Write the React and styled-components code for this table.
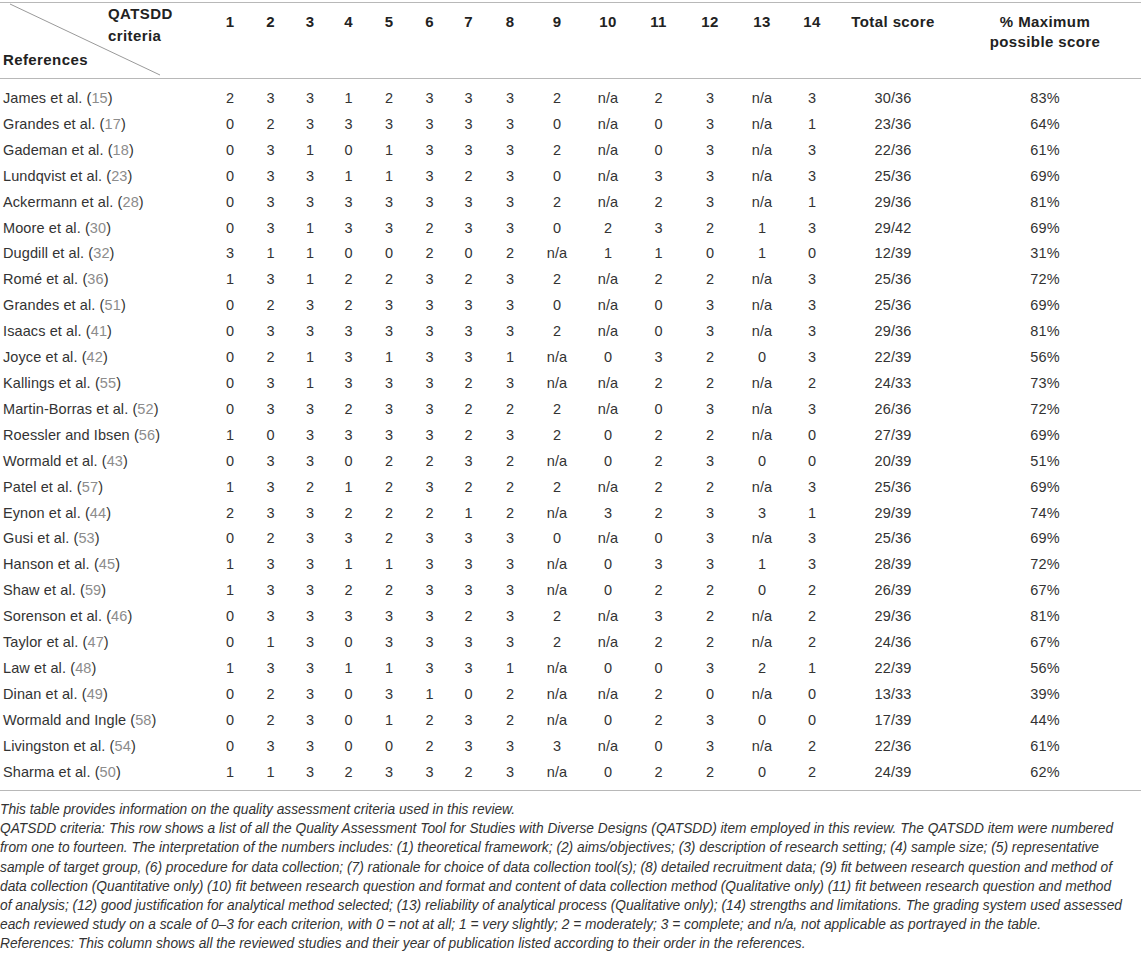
import React from "react";
import styled, { createGlobalStyle } from "styled-components";

const GlobalStyle = createGlobalStyle`
  html, body { margin: 0; padding: 0; background: #fff; }
  body { font-family: "Liberation Sans", Arial, Helvetica, sans-serif; }
`;

const Page = styled.div`
  width: 1144px;
  padding-top: 2px;
`;

const Table = styled.table`
  width: 1141px;
  table-layout: fixed;
  border-collapse: collapse;
  border-top: 1px solid #b8b8b8;
  border-bottom: 1px solid #b8b8b8;
  font-size: 14.5px;
  letter-spacing: 0.1px;
  color: #333;
`;

const HeadRow = styled.tr`
  border-bottom: 1px solid #b8b8b8;
`;

const HeadCell = styled.th`
  vertical-align: top;
  padding: 9px 0 0;
  line-height: 20px;
  font-size: 15px;
  letter-spacing: 0.4px;
  font-weight: bold;
  color: #222;
  text-align: center;
  white-space: nowrap;
`;

const CornerCell = styled.th`
  position: relative;
  height: 75px;
  padding: 0;
  text-align: left;
  vertical-align: top;
  font-size: 15px;
  letter-spacing: 0.4px;
  font-weight: bold;
  color: #222;
`;

const CornerInner = styled.div`
  height: 75px;
  box-sizing: border-box;
  padding: 0 0 8px 3px;
  display: flex;
  flex-direction: column;
  justify-content: space-between;
`;

const CriteriaLabel = styled.div`
  padding-left: 105px;
  line-height: 22px;
`;

const RefLabel = styled.div`
  line-height: 20px;
`;

const Diagonal = styled.svg`
  position: absolute;
  left: 0;
  top: 0;
  width: 210px;
  height: 75px;
  pointer-events: none;
`;

const Row = styled.tr`
  &:first-child td { padding-top: 11px; }
  &:last-child td { padding-bottom: 8.6px; }
`;

const Cell = styled.td`
  text-align: center;
  padding: 4px 0;
  line-height: 17.9px;
  white-space: nowrap;
`;

const NameCell = styled(Cell)`
  text-align: left;
  padding-left: 3px;
`;

const Cite = styled.span`
  color: #8c8c8c;
`;

const Foot = styled.div`
  padding-top: 9px;
  font-style: italic;
  font-size: 13.75px;
  line-height: 19.2px;
  color: #333;
  white-space: nowrap;
`;

const FootLine = styled.div``;

const colWidths = [210, 40, 41, 38, 39, 42, 39, 39, 44, 50, 52, 49, 54, 50, 50, 112, 192];

const rows = [
  ["James et al.", "15", "2 3 3 1 2 3 3 3 2 n/a 2 3 n/a 3 30/36 83%"],
  ["Grandes et al.", "17", "0 2 3 3 3 3 3 3 0 n/a 0 3 n/a 1 23/36 64%"],
  ["Gademan et al.", "18", "0 3 1 0 1 3 3 3 2 n/a 0 3 n/a 3 22/36 61%"],
  ["Lundqvist et al.", "23", "0 3 3 1 1 3 2 3 0 n/a 3 3 n/a 3 25/36 69%"],
  ["Ackermann et al.", "28", "0 3 3 3 3 3 3 3 2 n/a 2 3 n/a 1 29/36 81%"],
  ["Moore et al.", "30", "0 3 1 3 3 2 3 3 0 2 3 2 1 3 29/42 69%"],
  ["Dugdill et al.", "32", "3 1 1 0 0 2 0 2 n/a 1 1 0 1 0 12/39 31%"],
  ["Romé et al.", "36", "1 3 1 2 2 3 2 3 2 n/a 2 2 n/a 3 25/36 72%"],
  ["Grandes et al.", "51", "0 2 3 2 3 3 3 3 0 n/a 0 3 n/a 3 25/36 69%"],
  ["Isaacs et al.", "41", "0 3 3 3 3 3 3 3 2 n/a 0 3 n/a 3 29/36 81%"],
  ["Joyce et al.", "42", "0 2 1 3 1 3 3 1 n/a 0 3 2 0 3 22/39 56%"],
  ["Kallings et al.", "55", "0 3 1 3 3 3 2 3 n/a n/a 2 2 n/a 2 24/33 73%"],
  ["Martin-Borras et al.", "52", "0 3 3 2 3 3 2 2 2 n/a 0 3 n/a 3 26/36 72%"],
  ["Roessler and Ibsen", "56", "1 0 3 3 3 3 2 3 2 0 2 2 n/a 0 27/39 69%"],
  ["Wormald et al.", "43", "0 3 3 0 2 2 3 2 n/a 0 2 3 0 0 20/39 51%"],
  ["Patel et al.", "57", "1 3 2 1 2 3 2 2 2 n/a 2 2 n/a 3 25/36 69%"],
  ["Eynon et al.", "44", "2 3 3 2 2 2 1 2 n/a 3 2 3 3 1 29/39 74%"],
  ["Gusi et al.", "53", "0 2 3 3 2 3 3 3 0 n/a 0 3 n/a 3 25/36 69%"],
  ["Hanson et al.", "45", "1 3 3 1 1 3 3 3 n/a 0 3 3 1 3 28/39 72%"],
  ["Shaw et al.", "59", "1 3 3 2 2 3 3 3 n/a 0 2 2 0 2 26/39 67%"],
  ["Sorenson et al.", "46", "0 3 3 3 3 3 2 3 2 n/a 3 2 n/a 2 29/36 81%"],
  ["Taylor et al.", "47", "0 1 3 0 3 3 3 3 2 n/a 2 2 n/a 2 24/36 67%"],
  ["Law et al.", "48", "1 3 3 1 1 3 3 1 n/a 0 0 3 2 1 22/39 56%"],
  ["Dinan et al.", "49", "0 2 3 0 3 1 0 2 n/a n/a 2 0 n/a 0 13/33 39%"],
  ["Wormald and Ingle", "58", "0 2 3 0 1 2 3 2 n/a 0 2 3 0 0 17/39 44%"],
  ["Livingston et al.", "54", "0 3 3 0 0 2 3 3 3 n/a 0 3 n/a 2 22/36 61%"],
  ["Sharma et al.", "50", "1 1 3 2 3 3 2 3 n/a 0 2 2 0 2 24/39 62%"],
];

const footLines = [
  "This table provides information on the quality assessment criteria used in this review.",
  "QATSDD criteria: This row shows a list of all the Quality Assessment Tool for Studies with Diverse Designs (QATSDD) item employed in this review. The QATSDD item were numbered",
  "from one to fourteen. The interpretation of the numbers includes: (1) theoretical framework; (2) aims/objectives; (3) description of research setting; (4) sample size; (5) representative",
  "sample of target group, (6) procedure for data collection; (7) rationale for choice of data collection tool(s); (8) detailed recruitment data; (9) fit between research question and method of",
  "data collection (Quantitative only) (10) fit between research question and format and content of data collection method (Qualitative only) (11) fit between research question and method",
  "of analysis; (12) good justification for analytical method selected; (13) reliability of analytical process (Qualitative only); (14) strengths and limitations. The grading system used assessed",
  "each reviewed study on a scale of 0–3 for each criterion, with 0 = not at all; 1 = very slightly; 2 = moderately; 3 = complete; and n/a, not applicable as portrayed in the table.",
  "References: This column shows all the reviewed studies and their year of publication listed according to their order in the references.",
];

export default function App() {
  return (
    <Page>
      <GlobalStyle />
      <Table>
        <colgroup>
          {colWidths.map((w, i) => (
            <col key={i} style={{ width: w }} />
          ))}
        </colgroup>
        <thead>
          <HeadRow>
            <CornerCell>
              <Diagonal viewBox="0 0 210 75">
                <line x1="10" y1="1" x2="160" y2="72" stroke="#9a9a9a" strokeWidth="1" />
              </Diagonal>
              <CornerInner>
                <CriteriaLabel>
                  QATSDD
                  <br />
                  criteria
                </CriteriaLabel>
                <RefLabel>References</RefLabel>
              </CornerInner>
            </CornerCell>
            {Array.from({ length: 14 }, (_, i) => (
              <HeadCell key={i}>{i + 1}</HeadCell>
            ))}
            <HeadCell>Total score</HeadCell>
            <HeadCell>
              % Maximum
              <br />
              possible score
            </HeadCell>
          </HeadRow>
        </thead>
        <tbody>
          {rows.map(([name, cite, vals], r) => (
            <Row key={r}>
              <NameCell>
                {name} (<Cite>{cite}</Cite>)
              </NameCell>
              {vals.split(" ").map((v, i) => (
                <Cell key={i}>{v}</Cell>
              ))}
            </Row>
          ))}
        </tbody>
      </Table>
      <Foot>
        {footLines.map((l, i) => (
          <FootLine key={i}>{l}</FootLine>
        ))}
      </Foot>
    </Page>
  );
}
